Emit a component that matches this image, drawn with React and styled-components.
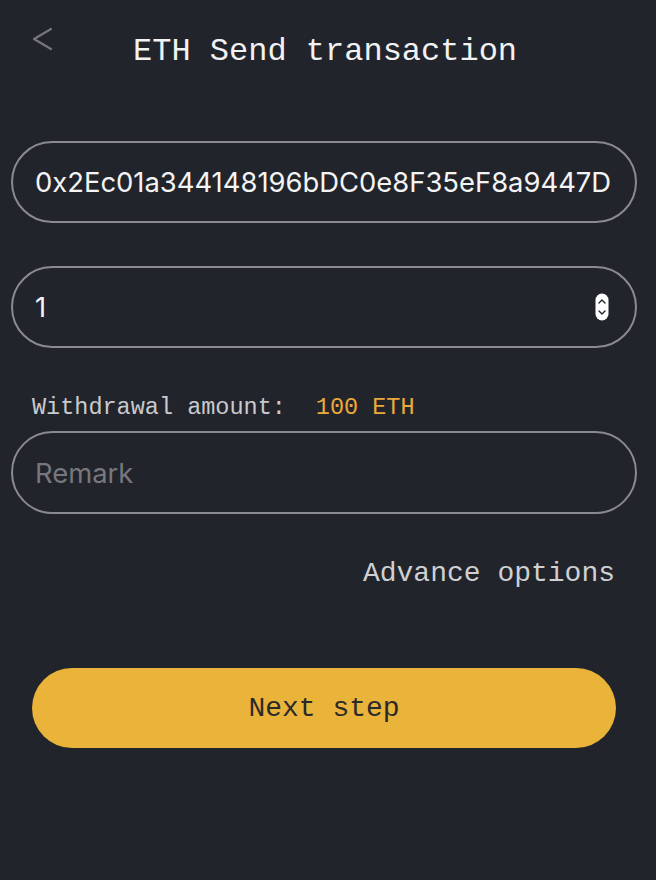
import React from 'react';
import styled, { createGlobalStyle } from 'styled-components';

const GlobalStyle = createGlobalStyle`
  html, body {
    margin: 0;
    padding: 0;
    background: #22242c;
  }
  * {
    box-sizing: border-box;
  }
`;

function BackIcon() {
  return (
    <svg width="22" height="24" viewBox="0 0 22 24" fill="none">
      <polyline points="20,2 3,12 20,22" stroke="#74767c" strokeWidth="2.2" strokeLinecap="round" strokeLinejoin="round" />
    </svg>
  );
}

function Spinner() {
  return (
    <SpinnerBox>
      <svg width="14" height="28" viewBox="0 0 14 28">
        <rect x="0.5" y="0.5" width="13" height="27" rx="6.5" fill="#ffffff" />
        <polyline points="4,10 7,7 10,10" stroke="#22242c" strokeWidth="1.4" fill="none" strokeLinecap="round" strokeLinejoin="round" />
        <polyline points="4,18 7,21 10,18" stroke="#22242c" strokeWidth="1.4" fill="none" strokeLinecap="round" strokeLinejoin="round" />
      </svg>
    </SpinnerBox>
  );
}

function App() {
  return (
    <Page>
      <GlobalStyle />
      <Header>
        <BackButton>
          <BackIcon />
        </BackButton>
        <Title>ETH Send transaction</Title>
      </Header>

      <Form>
        <Field>
          <Input defaultValue="0x2Ec01a344148196bDC0e8F35eF8a9447D" />
        </Field>

        <Field $top={43}>
          <Input defaultValue="1" />
          <Spinner />
        </Field>

        <Label>
          Withdrawal amount:<Amount>100 ETH</Amount>
        </Label>

        <Field $top={9} $height={83}>
          <Input placeholder="Remark" />
        </Field>

        <OptionsRow>
          <OptionsLink>Advance options</OptionsLink>
        </OptionsRow>

        <NextButton>Next step</NextButton>
      </Form>
    </Page>
  );
}

const Page = styled.div`
  width: 656px;
  min-height: 880px;
  background: #22242c;
  padding-top: 27px;
`;

const Header = styled.div`
  display: flex;
  align-items: flex-start;
  padding-left: 31px;
  height: 41px;
`;

const BackButton = styled.div`
  width: 22px;
  height: 24px;
  cursor: pointer;
`;

const Title = styled.h1`
  margin: 5px 0 0 80px;
  font-family: "Liberation Mono", "Courier New", monospace;
  font-weight: normal;
  font-size: 32px;
  line-height: 40px;
  color: #f2f2f2;
`;

const Form = styled.div`
  display: flex;
  flex-direction: column;
  padding: 73px 19px 0 11px;
`;

const Field = styled.div`
  display: flex;
  align-items: center;
  height: ${p => p.$height || 82}px;
  margin-top: ${p => p.$top || 0}px;
  padding: 0 18px 0 22px;
  border: 2px solid #8a8b91;
  border-radius: 42px;
`;

const Input = styled.input`
  flex: 1;
  min-width: 0;
  height: 100%;
  border: none;
  outline: none;
  background: transparent;
  padding: 0;
  font-family: Inter, Roboto, "Liberation Sans", sans-serif;
  font-size: 27.4px;
  color: #f4f4f4;

  &::placeholder {
    color: #77787d;
  }
`;

const SpinnerBox = styled.div`
  display: flex;
  align-items: center;
  margin-right: 8px;
`;

const Label = styled.div`
  margin: 46px 0 0 21px;
  font-family: "Liberation Mono", "Courier New", monospace;
  font-size: 23.5px;
  line-height: 28px;
  color: #c9cacd;
`;

const Amount = styled.span`
  margin-left: 30px;
  color: #eaa93a;
`;

const OptionsRow = styled.div`
  display: flex;
  justify-content: flex-end;
  margin-top: 43px;
  padding-right: 22px;
`;

const OptionsLink = styled.span`
  font-family: "Liberation Mono", "Courier New", monospace;
  font-size: 28px;
  line-height: 34px;
  color: #cfd0d2;
  cursor: pointer;
`;

const NextButton = styled.button`
  margin: 77px 21px 0 21px;
  height: 80px;
  border: none;
  border-radius: 40px;
  background: #eab43b;
  font-family: "Liberation Mono", "Courier New", monospace;
  font-size: 28px;
  color: #2a2a2a;
  cursor: pointer;
`;

export default App;
